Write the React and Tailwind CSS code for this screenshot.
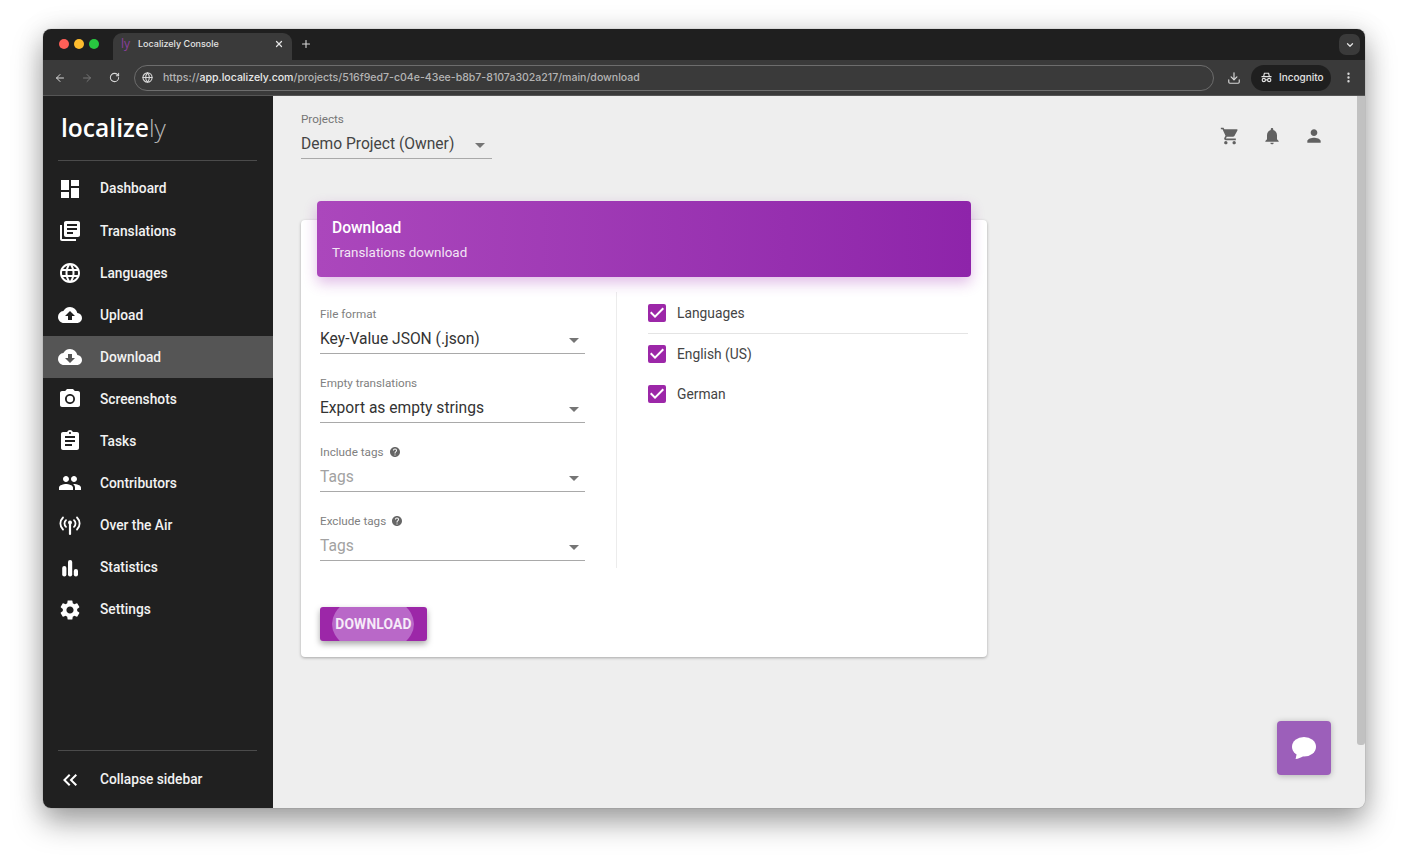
import React from "react";
import {
  MdDashboard,
  MdLibraryBooks,
  MdLanguage,
  MdCloudUpload,
  MdCloudDownload,
  MdPhotoCamera,
  MdAssignment,
  MdPeople,
  MdSettings,
  MdShoppingCart,
  MdNotifications,
  MdPerson,
  MdHelp,
  MdCheckBox,
  MdArrowDropDown,
  MdKeyboardDoubleArrowLeft,
} from "react-icons/md";
import { ArrowLeft, ArrowRight, RotateCw, Globe, Download, MoreVertical, ChevronDown, Plus, X } from "lucide-react";

const StatsIcon = ({ className }) => (
  <svg viewBox="0 0 24 24" className={className} fill="currentColor">
    <rect x="4.2" y="10" width="4.2" height="10.5" rx="2.1" />
    <rect x="10" y="4" width="4.2" height="16.5" rx="2.1" />
    <rect x="15.8" y="13" width="4.2" height="7.5" rx="2.1" />
  </svg>
);

const AirIcon = ({ className }) => (
  <svg viewBox="0 0 24 24" className={className} fill="none" stroke="currentColor" strokeWidth="1.8" strokeLinecap="round">
    <path d="M5 4.500C1.500 8 1.500 13 5 16.500" />
    <path d="M19 4.500C22.500 8 22.500 13 19 16.500" />
    <path d="M8 7.200C6 9 6 12 8 13.800" />
    <path d="M16 7.200C18 9 18 12 16 13.800" />
    <circle cx="12" cy="9.500" r="2" fill="currentColor" stroke="none" />
    <path d="M12 11v10" strokeWidth="2.200" />
  </svg>
);

const IncognitoIcon = ({ className }) => (
  <svg viewBox="0 0 16 16" className={className} fill="none" stroke="currentColor" strokeWidth="1.4">
    <path d="M4.500 6.500 5.400 2.800h5.200l.9 3.700" />
    <path d="M1.800 7h12.400" />
    <circle cx="4.700" cy="11" r="2" />
    <circle cx="11.300" cy="11" r="2" />
    <path d="M6.700 11h2.600" />
  </svg>
);

const ChatIcon = ({ className }) => (
  <svg viewBox="0 0 24 22" className={className} fill="currentColor">
    <ellipse cx="12" cy="9.800" rx="12" ry="9.800" />
    <path d="M5 15.500 3.600 22c2.600-.3 5.400-1.400 7.400-2.800z" />
  </svg>
);

const navItems = [
  { label: "Dashboard", icon: MdDashboard },
  { label: "Translations", icon: MdLibraryBooks },
  { label: "Languages", icon: MdLanguage },
  { label: "Upload", icon: MdCloudUpload },
  { label: "Download", icon: MdCloudDownload, active: true },
  { label: "Screenshots", icon: MdPhotoCamera },
  { label: "Tasks", icon: MdAssignment },
  { label: "Contributors", icon: MdPeople },
  { label: "Over the Air", icon: AirIcon },
  { label: "Statistics", icon: StatsIcon },
  { label: "Settings", icon: MdSettings },
];

const fields = [
  { label: "File format", value: "Key-Value JSON (.json)" },
  { label: "Empty translations", value: "Export as empty strings" },
  { label: "Include tags", value: "Tags", help: true, placeholder: true },
  { label: "Exclude tags", value: "Tags", help: true, placeholder: true },
];

const languages = [
  { label: "English (US)" },
  { label: "German" },
];

const BrowserBar = () => (
  <div className="shrink-0 font-['Inter',sans-serif]">
    {/* Tab strip */}
    <div className="h-[31px] bg-[#1f1f1f] flex items-end pl-[16px] pr-[5px]">
      <div className="flex items-center gap-[5px] h-full pb-[1px] w-[54px]">
        <span className="size-[10px] rounded-full bg-[#ff5f57]" />
        <span className="size-[10px] rounded-full bg-[#febc2e]" />
        <span className="size-[10px] rounded-full bg-[#28c840]" />
      </div>
      <div className="w-[179px] h-[27px] bg-[#3a3a3a] rounded-t-[9px] flex items-center pl-[8px] pr-[8px] pb-[5px]">
        <span className="text-[12px] leading-none text-[#8a3f9c] font-['Open_Sans',sans-serif] w-[17px]">ly</span>
        <span className="text-[9px] font-medium text-[#e3e3e3] flex-1">Localizely Console</span>
        <X className="size-[10px] text-[#e3e3e3]" strokeWidth={3} />
      </div>
      <Plus className="size-[12px] text-[#d8d8d8] ml-[8px] mb-[10px]" strokeWidth={2.2} />
      <div className="ml-auto mb-[5px] size-[21px] rounded-[7px] bg-[#3a3a3a] flex items-center justify-center">
        <ChevronDown className="size-[10px] text-[#e3e3e3]" strokeWidth={3} />
      </div>
    </div>
    {/* Toolbar */}
    <div className="h-[36px] bg-[#3a3a3a] flex items-center pl-[11px] pr-[9px] border-b border-[#555]">
      <ArrowLeft className="size-[12px] text-[#d8d8d8]" strokeWidth={2} />
      <ArrowRight className="size-[12px] text-[#777] ml-[15px]" strokeWidth={2} />
      <RotateCw className="size-[11px] text-[#d8d8d8] ml-[16px]" strokeWidth={2.2} />
      <div className="ml-[14px] w-[1080px] h-[26px] rounded-full border border-[#6d6d6d] bg-[#3a3a3a] flex items-center pl-[7px]">
        <Globe className="size-[11px] text-[#d8d8d8]" strokeWidth={2.4} />
        <span className="ml-[10px] text-[10.55px] text-[#b4b4b4] font-medium whitespace-nowrap">
          https://<span className="text-[#e8e8e8]">app.localizely.com</span>/projects/516f9ed7-c04e-43ee-b8b7-8107a302a217/main/download
        </span>
      </div>
      <Download className="size-[14px] text-[#d8d8d8] ml-[13px]" strokeWidth={2} />
      <div className="ml-[10px] w-[80px] h-[26px] rounded-full bg-[#1f1f1f] flex items-center pl-[9px] gap-[6px]">
        <IncognitoIcon className="size-[13px] text-[#e3e3e3]" />
        <span className="text-[10px] font-medium text-[#e3e3e3]">Incognito</span>
      </div>
      <MoreVertical className="size-[13px] text-[#d8d8d8] ml-[11px]" strokeWidth={2.4} />
    </div>
  </div>
);

const Sidebar = () => (
  <aside className="w-[230px] shrink-0 bg-[#202020] flex flex-col text-white">
    <div className="h-[65px] ml-[15px] mr-[16px] border-b border-[#4b4b4b] flex items-center pl-[3px] font-['Open_Sans',sans-serif] text-[24.6px] leading-none">
      <span className="font-semibold">localize</span>
      <span className="font-light text-[#b5b5b5]">ly</span>
    </div>
    <nav className="pt-[6.7px] flex-1">
      {navItems.map(({ label, icon: Icon, active }) => (
        <div
          key={label}
          className={`h-[42.1px] flex items-center ${active ? "bg-[#555555]" : ""}`}
        >
          <div className="w-[54px] mr-[3px] flex justify-center">
            <Icon className="size-[24px]" />
          </div>
          <span className="text-[13.75px] font-medium text-[#f2f2f2]">{label}</span>
        </div>
      ))}
    </nav>
    <div className="h-[58px] ml-[15px] mr-[16px] border-t border-[#4b4b4b] flex items-center">
      <MdKeyboardDoubleArrowLeft className="size-[24px]" />
      <span className="ml-[18px] text-[13.75px] font-medium text-[#f2f2f2]">Collapse sidebar</span>
    </div>
  </aside>
);

const SelectField = ({ label, value, help, placeholder }) => (
  <div className="h-[69px] pt-[15px]">
    <div className="flex items-center gap-[5px] text-[11.7px] leading-[14px] text-[#808080]">
      {label}
      {help && <MdHelp className="size-[12px] text-[#666]" />}
    </div>
    <div className="mt-[3px] h-[30px] pt-[2px] border-b border-[#a9a9a9] flex items-center justify-between">
      <span className={`text-[15.6px] ${placeholder ? "text-[#a2a2a2]" : "text-[#333]"}`}>{value}</span>
      <MdArrowDropDown className="size-[24px] text-[#757575] -mr-[1px]" />
    </div>
  </div>
);

const CheckRow = ({ label }) => (
  <div className="flex items-center h-[40px]">
    <MdCheckBox className="size-[24px] -ml-[3px] text-[#9c27a8]" />
    <span className="ml-[8px] text-[13.8px] text-[#444]">{label}</span>
  </div>
);

const DownloadCard = () => (
  <div className="ml-[28px] mt-[61px] w-[686px] h-[437px] bg-white rounded-[4px] shadow-[0_1px_3px_rgba(0,0,0,0.3)] px-[16px]">
    <div className="h-[76px] relative -top-[19px] rounded-[4px] bg-gradient-to-r from-[#ab47bc] to-[#8e24aa] shadow-[0_6px_14px_rgba(156,39,176,0.3)] pl-[15px] pt-[17px] text-white">
      <h2 className="text-[15.6px] leading-[20px] font-medium">Download</h2>
      <p className="mt-[5px] text-[13.4px] leading-[20px] text-[#f3e5f5]">Translations download</p>
    </div>
    <div className="flex -mt-[4px]">
      <div className="w-[300px] pl-[3px] pr-[31px] border-r border-[#ececec] h-[276px]">
        {fields.map((f) => (
          <SelectField key={f.label} {...f} />
        ))}
      </div>
      <div className="flex-1 pl-[31px] pr-[3px]">
        <div className="border-b border-[#e4e4e4] h-[42px] flex items-end">
          <CheckRow label="Languages" />
        </div>
        {languages.map((l) => (
          <CheckRow key={l.label} label={l.label} />
        ))}
      </div>
    </div>
    <button
      type="button"
      className="relative block ml-[3px] mt-[39px] w-[107px] h-[34px] rounded-[3px] bg-[#9c27a8] overflow-hidden shadow-[0_3px_6px_rgba(0,0,0,0.35)]"
    >
      <span className="absolute left-[12px] top-[-12px] w-[82px] h-[58px] rounded-[50%] bg-[#b968c8]" />
      <span className="relative text-[13.8px] font-bold tracking-[0.2px] text-[#f6ebf8]">DOWNLOAD</span>
    </button>
  </div>
);

const App = () => (
  <div className="w-[1408px] h-[865px] bg-white overflow-hidden pl-[43px] pt-[29px] font-['Roboto',sans-serif]">
    <div className="w-[1322px] h-[779px] rounded-[8px] overflow-hidden flex flex-col shadow-[0_0_1px_rgba(0,0,0,0.5),0_0_28px_rgba(0,0,0,0.1),0_14px_30px_rgba(0,0,0,0.36)] bg-[#eeeeee]">
      <BrowserBar />
      <div className="flex flex-1 min-h-0">
        <Sidebar />
        <main className="relative flex-1 bg-[#eeeeee] min-w-0">
          <div className="flex justify-between pl-[28px] pr-[41px]">
            <div className="pt-[16px] w-[191px]">
              <div className="text-[11.7px] leading-[14px] text-[#757575]">Projects</div>
              <div className="mt-[4px] h-[29px] pt-[1px] border-b border-[#a9a9a9] flex items-center justify-between">
                <span className="text-[15.6px] text-[#444]">Demo Project (Owner)</span>
                <MdArrowDropDown className="size-[24px] text-[#757575]" />
              </div>
            </div>
            <div className="flex gap-[22px] pt-[30px] text-[#616161]">
              <MdShoppingCart className="size-[20px]" />
              <MdNotifications className="size-[20px]" />
              <MdPerson className="size-[20px]" />
            </div>
          </div>
          <DownloadCard />
          {/* Page scrollbar */}
          <div className="absolute right-0 top-0 w-[8px] h-[649px] bg-[#c1c1c1] rounded-b-[3px]" />
          {/* Chat widget */}
          <div className="absolute left-[1004px] top-[625px] size-[54px] rounded-[4px] bg-[#9c5fba] flex items-center justify-center text-white shadow-[0_1px_6px_rgba(0,0,0,0.25)]">
            <ChatIcon className="w-[24px] h-[22px]" />
          </div>
        </main>
      </div>
    </div>
  </div>
);

export default App;
